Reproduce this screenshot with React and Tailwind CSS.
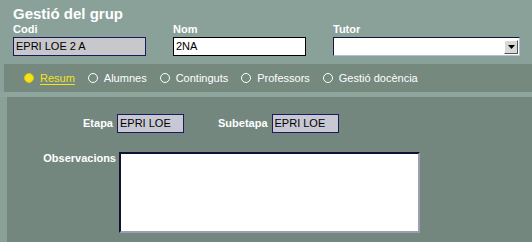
import React from 'react';

const tabs = ['Resum', 'Alumnes', 'Continguts', 'Professors', 'Gestió docència'];

function Radio({ active }) {
  if (active) {
    return <span className="inline-block w-[10px] h-[10px] rounded-full bg-[#f4e21a] border border-[#d9c800]" />;
  }
  return <span className="inline-block w-[10px] h-[10px] rounded-full border border-white" />;
}

export default function App() {
  return (
    <div className="w-[532px] h-[242px] overflow-hidden bg-[#8aa19a] text-white font-['Liberation_Sans',Arial,sans-serif]">
      {/* header */}
      <div className="h-[64px] pl-[13px] pt-[5px]">
        <h1 className="text-[15px] font-bold leading-[18px]">Gestió del grup</h1>
        <div className="flex">
          <div className="w-[160px]">
            <div className="text-[11px] font-bold leading-[13px]">Codi</div>
            <div className="w-[133px] h-[19px] mt-[1px] bg-[#c8c8cc] border border-[#1a1a5c] text-black text-[11px] leading-[17px] pl-[2px]">EPRI LOE 2 A</div>
          </div>
          <div className="w-[160px]">
            <div className="text-[11px] font-bold leading-[13px]">Nom</div>
            <div className="w-[133px] h-[19px] mt-[1px] bg-white border border-black text-black text-[11px] leading-[17px] pl-[2px]">2NA</div>
          </div>
          <div>
            <div className="text-[11px] font-bold leading-[13px]">Tutor</div>
            <div className="w-[187px] h-[19px] mt-[1px] bg-white border border-[#14143c] border-b-[#b8bcd8] border-r-[#b8bcd8] flex justify-end items-center pr-[1px]">
              <div className="w-[14px] h-[14px] bg-[#d8d8d4] border border-t-white border-l-white border-b-[#555] border-r-[#555] flex items-center justify-center">
                <svg width="7" height="4" viewBox="0 0 7 4"><path d="M0 0h7L3.5 4z" fill="#000" /></svg>
              </div>
            </div>
          </div>
        </div>
      </div>

      {/* tab bar */}
      <div className="ml-[4px] h-[28px] bg-[#75897f] flex items-center pl-[20px] gap-[13px] text-[11px]">
        {tabs.map((t, i) => (
          <div key={t} className="flex items-center gap-[6px]">
            <Radio active={i === 0} />
            <span className={i === 0 ? 'text-[#f4e21a] underline underline-offset-2' : 'text-white'}>{t}</span>
          </div>
        ))}
      </div>
      <div className="h-[5px] bg-[#8ea59e]" />

      {/* content */}
      <div className="ml-[7px] h-[150px] bg-[#73877f] pt-[17px] text-[11px]">
        <div className="flex items-center">
          <span className="w-[110px] text-right font-bold pr-[4px]">Etapa</span>
          <div className="w-[67px] h-[19px] bg-[#c8c8d4] border border-[#1a1a5c] text-black leading-[17px] pl-[2px]">EPRI LOE</div>
          <span className="ml-[34px] font-bold pr-[4px]">Subetapa</span>
          <div className="w-[67px] h-[19px] bg-[#c8c8d4] border border-[#1a1a5c] text-black leading-[17px] pl-[2px]">EPRI LOE</div>
        </div>
        <div className="flex mt-[19px]">
          <span className="w-[112px] text-right font-bold pr-[3px] leading-[12px]">Observacions</span>
          <div className="w-[301px] h-[81px] bg-white border-2 border-t-[#101030] border-l-[#101030] border-r-[#9aa0b4] border-b-[#9aa0b4]" />
        </div>
      </div>
    </div>
  );
}
